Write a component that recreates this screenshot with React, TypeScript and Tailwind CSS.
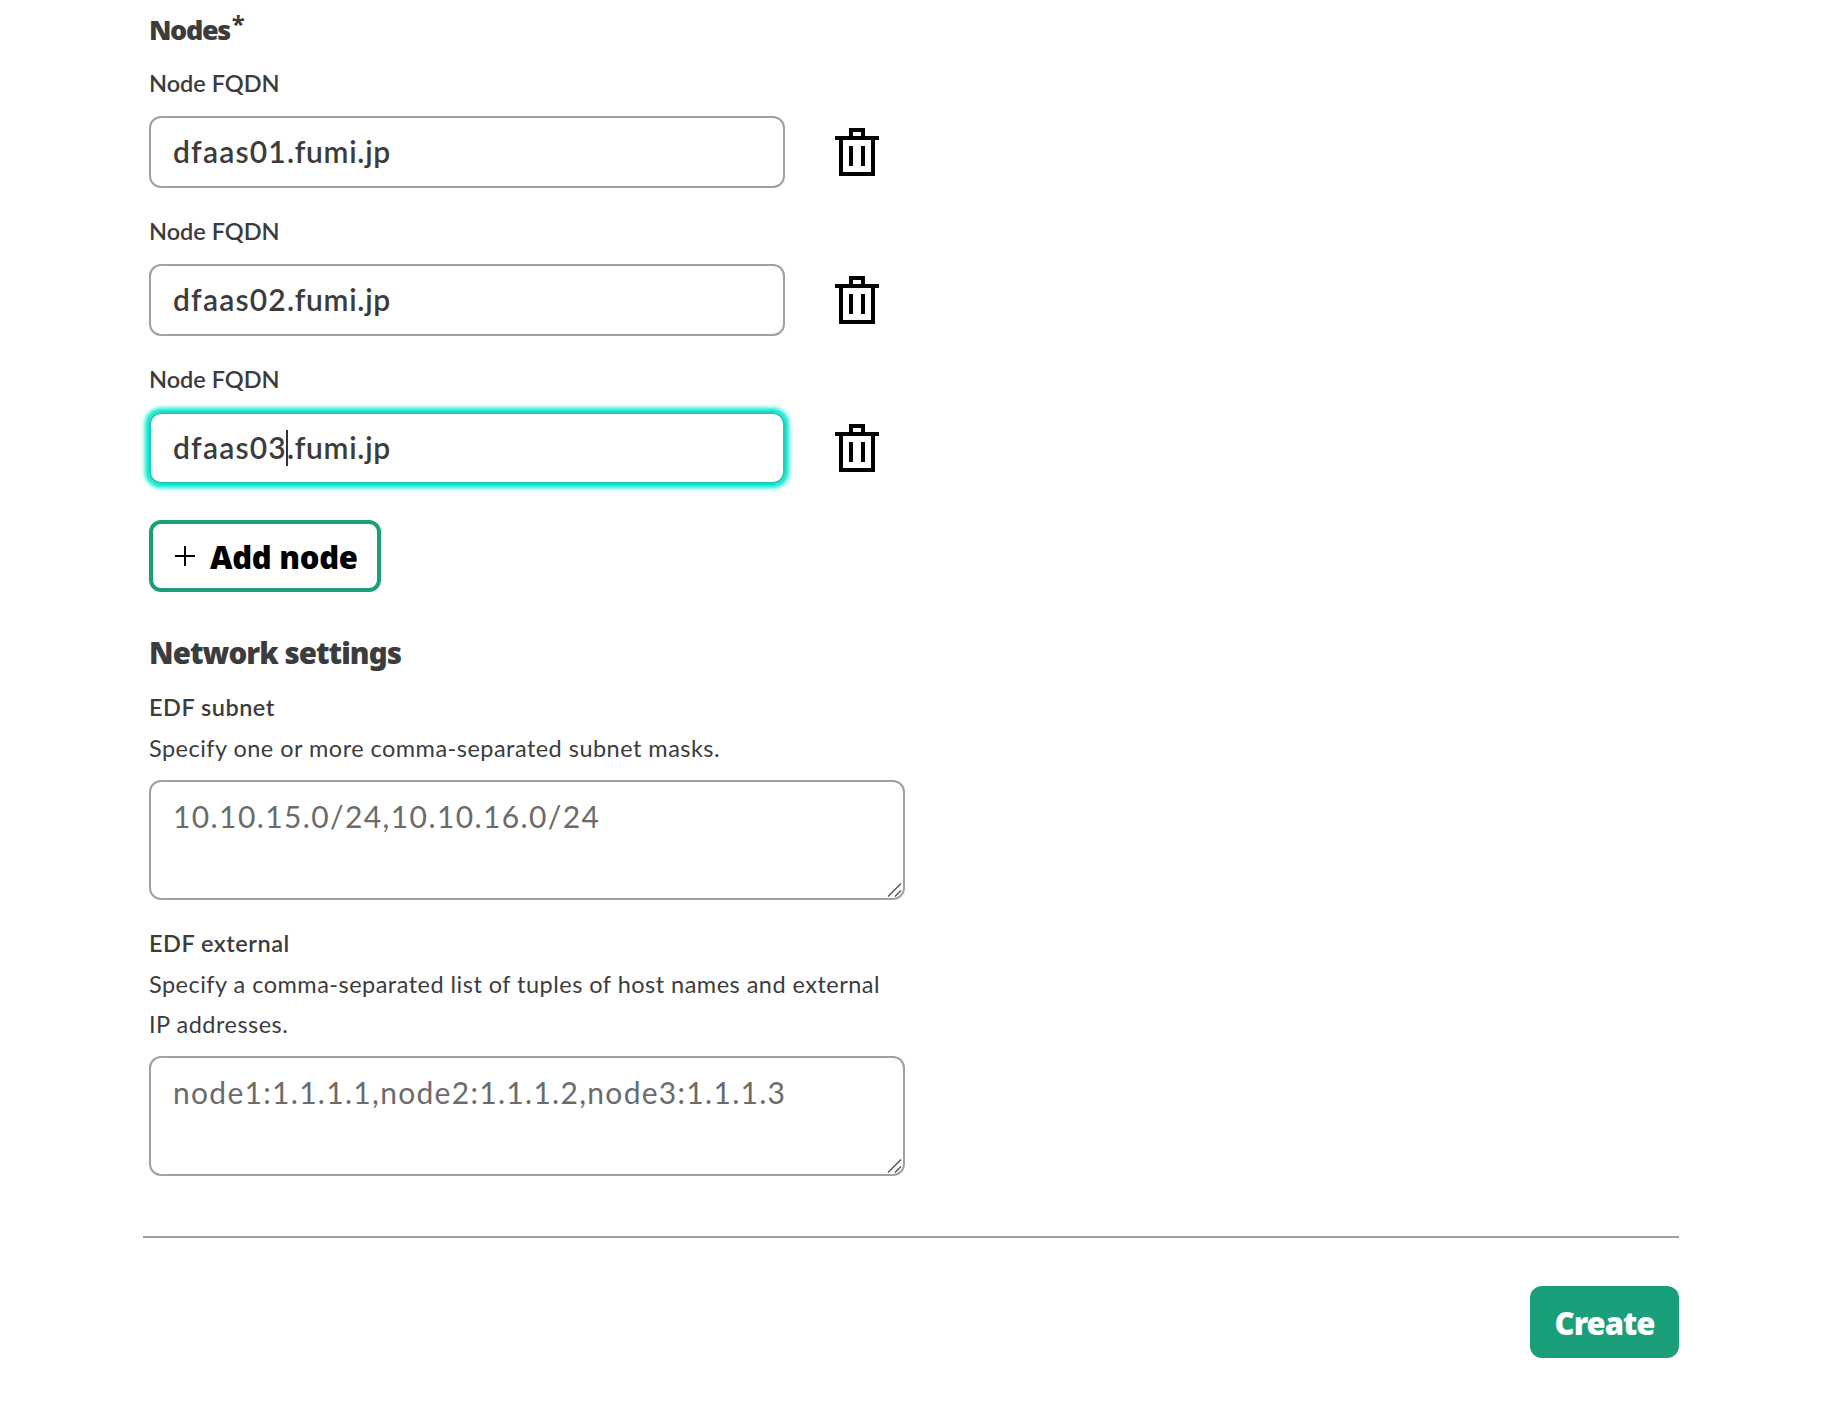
function Trash() {
  return (
    <svg className="h-12 w-12" viewBox="0 0 24 24" fill="none" stroke="#000" strokeWidth="2">
      <path d="M4 5h16v18H4zM1 5h22M9 5V1h6v4M9 9v10M15 9v10" />
    </svg>
  );
}

function NodeRow({ head, tail, focused }: { head: string; tail: string; focused?: boolean }) {
  return (
    <div className="h-[148px]">
      <div className="h-[53px] text-[23.5px] leading-10 font-semibold">Node FQDN</div>
      <div className="flex items-center gap-12">
        <div
          className={
            focused
              ? 'flex h-[72px] w-[636px] items-center rounded-xl border-2 border-[#1ecdb4] px-[22px] shadow-[0_0_4px_4px_#00e8cf]'
              : 'flex h-[72px] w-[636px] items-center rounded-xl border-2 border-[#a0a0a0] px-[22px]'
          }
        >
          <span className="flex items-center pb-0.5 text-[30px] leading-9 font-semibold tracking-[1.2px]">
            {head}
            {focused && <span className="-mx-px mt-0.5 h-9 w-0.5 bg-[#333]" />}
            <span className="tracking-[0.7px]">{tail}</span>
          </span>
        </div>
        <Trash />
      </div>
    </div>
  );
}

function Grip() {
  return (
    <svg className="absolute right-0 bottom-0 h-4 w-4" viewBox="0 0 16 16" stroke="#555" strokeWidth="1.5">
      <path d="M1 14.5L14 1.5M8 14.5l6-6" />
    </svg>
  );
}

export default function App() {
  return (
    <div className="min-h-[1402px] bg-white pr-[167px] pl-[149px] font-['Lato',sans-serif] text-[#3c3c3c]">
      <h2 className="flex h-[63px] pt-2.5 font-['Noto_Sans',sans-serif] text-[27px] leading-10 font-black tracking-[-1.4px]">
        Nodes
        <span className="-mt-1 ml-0.5 text-2xl leading-9 font-bold">*</span>
      </h2>
      <NodeRow head="dfaas01" tail=".fumi.jp" />
      <NodeRow head="dfaas02" tail=".fumi.jp" />
      <NodeRow head="dfaas03" tail=".fumi.jp" focused />
      <button className="mt-[13px] flex h-[72px] w-[232px] items-center rounded-xl border-4 border-[#1a9f7a] pl-[22px] font-['Noto_Sans',sans-serif] text-[31px] font-black text-black">
        <svg className="h-5 w-5" viewBox="0 0 20 20" stroke="#000" strokeWidth="2">
          <path d="M10 0v20M0 10h20" />
        </svg>
        <span className="ml-[15px] pt-0.5 tracking-[-0.3px]">Add node</span>
      </button>
      <h2 className="mt-[41px] font-['Noto_Sans',sans-serif] text-[29.5px] leading-10 font-black tracking-[-0.95px]">
        Network settings
      </h2>
      <div className="mt-3.5 text-[23.5px] leading-10">
        <div className="font-semibold tracking-[0.5px]">EDF subnet</div>
        <div className="mt-px tracking-[0.47px]">Specify one or more comma-separated subnet masks.</div>
      </div>
      <div className="relative mt-3 h-[120px] w-[756px] rounded-xl border-2 border-[#a0a0a0] px-[22px] pt-3.5 text-[30px] leading-10 tracking-[1.4px] text-[#6b6b6b]">
        10.10.15.0/24,10.10.16.0/24
        <Grip />
      </div>
      <div className="mt-[23px] w-[756px] text-[23.5px] leading-10">
        <div className="font-semibold tracking-[0.5px]">EDF external</div>
        <div className="mt-px tracking-[0.48px]">
          Specify a comma-separated list of tuples of host names and external IP addresses.
        </div>
      </div>
      <div className="relative mt-3 h-[120px] w-[756px] rounded-xl border-2 border-[#a0a0a0] px-[22px] pt-3.5 text-[30px] leading-10 tracking-[1.3px] text-[#6b6b6b]">
        node1:1.1.1.1,node2:1.1.1.2,node3:1.1.1.3
        <Grip />
      </div>
      <div className="mt-[60px] -ml-1.5 flex justify-end border-t-2 border-[#a0a0a0] pt-12">
        <button className="h-[72px] w-[149px] rounded-xl bg-[#1a9f7a] pt-0.5 font-['Noto_Sans',sans-serif] text-[31px] font-black tracking-[-1px] text-white">
          Create
        </button>
      </div>
    </div>
  );
}
